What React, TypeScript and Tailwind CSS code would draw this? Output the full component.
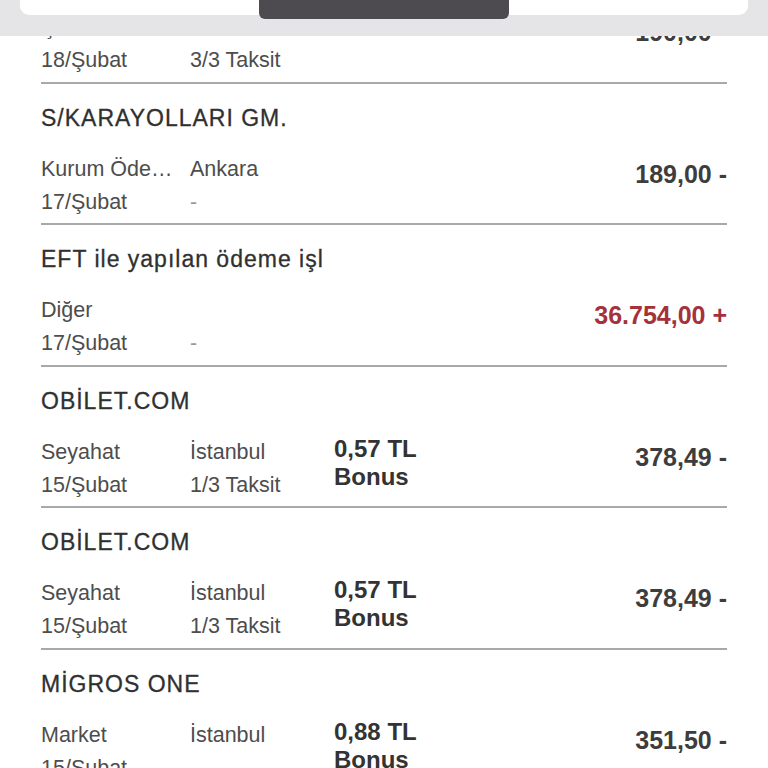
import React from "react";

type Row = {
  title: string;
  c1: [string, string];
  c2: [string, string];
  bonus?: string;
  amount: string;
  credit?: boolean;
};

const rows: Row[] = [
  { title: "KIRTASİYE", c1: ["Çanta", "18/Şubat"], c2: ["İstanbul", "3/3 Taksit"], amount: "190,00 -" },
  { title: "S/KARAYOLLARI GM.", c1: ["Kurum Öde…", "17/Şubat"], c2: ["Ankara", "-"], amount: "189,00 -" },
  { title: "EFT ile yapılan ödeme işl", c1: ["Diğer", "17/Şubat"], c2: ["", "-"], amount: "36.754,00 +", credit: true },
  { title: "OBİLET.COM", c1: ["Seyahat", "15/Şubat"], c2: ["İstanbul", "1/3 Taksit"], bonus: "0,57 TL", amount: "378,49 -" },
  { title: "OBİLET.COM", c1: ["Seyahat", "15/Şubat"], c2: ["İstanbul", "1/3 Taksit"], bonus: "0,57 TL", amount: "378,49 -" },
  { title: "MİGROS ONE", c1: ["Market", "15/Şubat"], c2: ["İstanbul", "-"], bonus: "0,88 TL", amount: "351,50 -" },
];

function Cell({ lines, dashGray }: { lines: [string, string]; dashGray?: boolean }) {
  return (
    <div className="flex flex-col">
      {lines.map((l, i) => (
        <div
          key={i}
          className={`h-[33px] leading-[33px] text-[21.5px] whitespace-nowrap ${
            l === "-" && dashGray ? "text-[#9a9a9a]" : "text-[#4d4d4d]"
          }`}
        >
          {l}
        </div>
      ))}
    </div>
  );
}

function TxRow({ r }: { r: Row }) {
  return (
    <div className="border-b-2 border-[#a9a9a9] pt-[19px] pb-[4.5px]">
      <div className="h-[30px] leading-[30px] text-[23px] tracking-[1px] text-[#303030] whitespace-nowrap [-webkit-text-stroke:0.3px_#303030]">
        {r.title}
      </div>
      <div className="mt-[20px] flex h-[66px]">
        <div className="w-[149px] shrink-0">
          <Cell lines={r.c1} />
        </div>
        <div className="w-[144px] shrink-0">
          <Cell lines={r.c2} dashGray />
        </div>
        <div className="flex-1">
          {r.bonus && (
            <div className="-mt-[1px] text-[24px] font-semibold leading-[28px] text-[#333333]">
              <div>{r.bonus}</div>
              <div>Bonus</div>
            </div>
          )}
        </div>
        <div
          className={`pt-[5px] text-[25px] font-bold leading-[33px] whitespace-nowrap ${
            r.credit ? "text-[#a5323b]" : "text-[#3d3d3d]"
          }`}
        >
          {r.amount}
        </div>
      </div>
    </div>
  );
}

export default function App() {
  return (
    <div className="relative h-[768px] w-[768px] overflow-hidden bg-white font-['Liberation_Sans',Arial,sans-serif]">
      <div className="-mt-[58px] px-[41px]">
        {rows.map((r, i) => (
          <TxRow key={i} r={r} />
        ))}
      </div>
      <div className="absolute left-0 top-0 h-[36px] w-full bg-[#e5e5e7]">
        <div className="absolute left-[20px] right-[20px] top-0 h-[15px] rounded-b-[9px] bg-white" />
        <div className="absolute left-[259px] top-0 h-[19px] w-[250px] rounded-b-[6px] bg-[#4e4b50]" />
      </div>
    </div>
  );
}
